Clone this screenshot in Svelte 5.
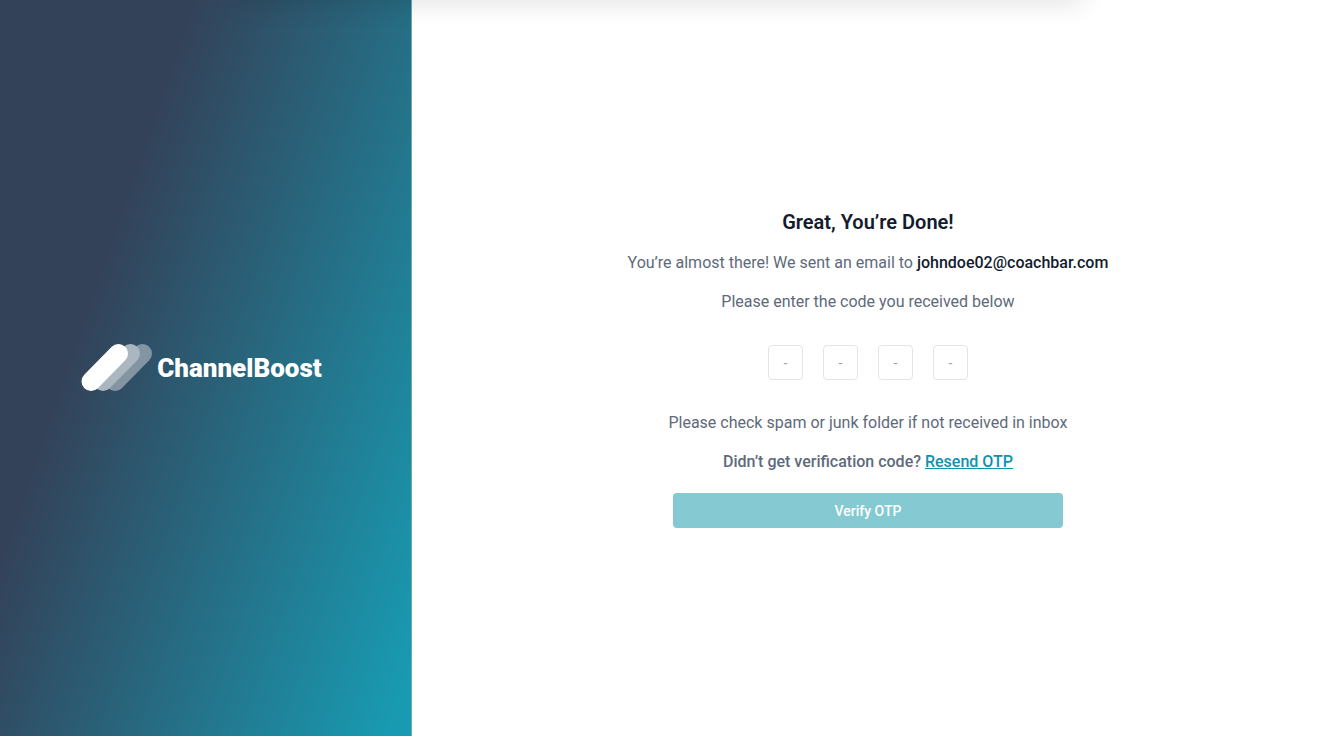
<script>
  const email = 'johndoe02@coachbar.com';
  let code = $state(['', '', '', '']);
</script>

<div class="page">
  <div class="top-shadow"></div>

  <aside class="brand">
    <div class="logo">
      <svg width="72" height="48" viewBox="0 0 72 48" aria-hidden="true">
        <g fill="none" stroke-width="19" stroke-linecap="round">
          <path d="M34 37.5 61.5 9.5" stroke="#8295a1" />
          <path d="M22 37.5 49.5 9.5" stroke="#aab7c0" />
          <path d="M10 37.5 37.5 9.5" stroke="#fff" />
        </g>
      </svg>
      <span class="name">ChannelBoost</span>
    </div>
  </aside>

  <main class="content">
    <form class="verify" onsubmit={(event) => event.preventDefault()}>
      <h1>Great, You’re Done!</h1>
      <p>You’re almost there! We sent an email to <strong>{email}</strong></p>
      <p>Please enter the code you received below</p>

      <div class="code">
        {#each code as _, i}
          <input
            type="text"
            inputmode="numeric"
            maxlength="1"
            placeholder="-"
            aria-label={`Digit ${i + 1}`}
            bind:value={code[i]}
          />
        {/each}
      </div>

      <p>Please check spam or junk folder if not received in inbox</p>
      <p class="resend">Didn’t get verification code? <a href="#resend">Resend OTP</a></p>
      <button type="submit">Verify OTP</button>
    </form>
  </main>
</div>

<style>
  :global(body) {
    background: #fff;
  }

  .page {
    position: relative;
    display: grid;
    grid-template-columns: 5fr 11fr;
    min-height: 100vh;
    overflow: hidden;
    font-family: Roboto, sans-serif;
    color: #5e6a7a;
  }

  .top-shadow {
    position: absolute;
    top: -20px;
    left: 18%;
    right: 18%;
    height: 20px;
    box-shadow: 0 0 28px rgba(0, 0, 0, 0.16);
  }

  .brand {
    display: flex;
    align-items: center;
    justify-content: center;
    box-sizing: border-box;
    padding-right: 8px;
    border-right: 1px solid #6ba9b8;
    background: linear-gradient(109deg, #334259 29%, #189bb2 97%);
  }

  .logo {
    display: flex;
    align-items: center;
    gap: 4px;
  }

  .logo svg {
    display: block;
  }

  .name {
    color: #fff;
    font-size: 26px;
    line-height: 32px;
    font-weight: 900;
  }

  .content {
    display: flex;
    align-items: center;
    justify-content: center;
    padding: 2px 0 0 6px;
  }

  .verify {
    display: flex;
    flex-direction: column;
    align-items: center;
    gap: 19px;
    text-align: center;
  }

  h1,
  p {
    margin: 0;
  }

  h1 {
    color: #131b2e;
    font-size: 20px;
    line-height: 24px;
    font-weight: 600;
  }

  p {
    font-size: 16px;
    line-height: 20px;
  }

  strong {
    color: #131b2e;
    font-weight: 500;
  }

  .code {
    display: flex;
    gap: 20px;
    padding: 14px 0;
  }

  input {
    box-sizing: border-box;
    width: 35px;
    height: 35px;
    padding: 0;
    border: 1px solid #e4e4e4;
    border-radius: 4px;
    background: #fff;
    color: #131b2e;
    font: 14px/20px Roboto, sans-serif;
    text-align: center;
  }

  input::placeholder {
    color: #9a9fa8;
    opacity: 1;
  }

  .resend {
    font-weight: 500;
  }

  a {
    color: #0e93ab;
    text-decoration: underline;
    text-decoration-thickness: 1px;
    text-underline-offset: 1px;
  }

  button {
    width: 390px;
    max-width: 100%;
    height: 35px;
    margin-top: 2px;
    padding: 0;
    border: 0;
    border-radius: 4px;
    background: #85c9d3;
    color: #fff;
    font: 500 14px/20px Roboto, sans-serif;
  }
</style>
